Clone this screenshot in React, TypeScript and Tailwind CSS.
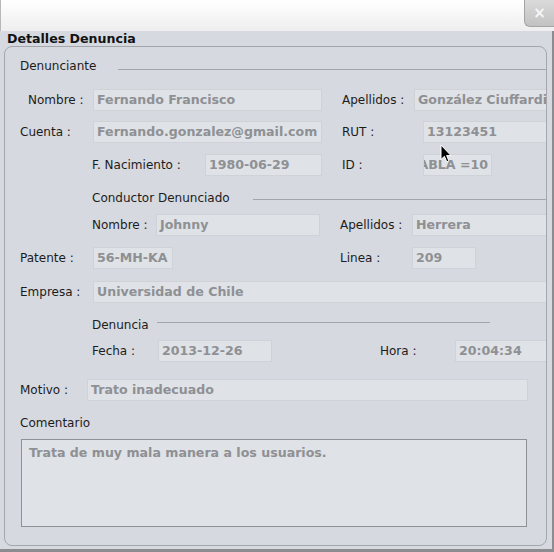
import React from 'react';

const Field: React.FC<{ className: string; children?: React.ReactNode; right?: boolean }> = ({ className, children, right }) => (
  <div
    className={`h-[22px] shrink-0 bg-[#dfe2e6] border border-[#cfd2d7] flex items-center overflow-hidden whitespace-nowrap font-bold text-[12.6px] text-[#8e9094] ${
      right ? 'justify-end pr-[3px]' : 'pl-[3px]'
    } ${className}`}
  >
    {children}
  </div>
);

const Label: React.FC<{ className: string; children: React.ReactNode }> = ({ className, children }) => (
  <div className={`shrink-0 whitespace-nowrap ${className}`}>{children}</div>
);

const App: React.FC = () => {
  return (
    <div className="w-[554px] h-[552px] relative overflow-hidden bg-[#d6d9df] font-['DejaVu_Sans',sans-serif] text-[12px] leading-[16px] text-[#1c1c1c]">
      {/* window decoration */}
      <div className="h-[31px] bg-gradient-to-b from-white to-[#eeeeee] flex justify-end border-l border-[#b8b8b8]">
        <div className="w-[30px] h-[27px] bg-gradient-to-b from-[#dadada] to-[#c2c2c2] border-l border-b border-[#a4a4a4] rounded-bl-[6px] flex items-center justify-center text-[#f6f6f6] font-bold text-[15px]">
          ×
        </div>
      </div>

      <div className="h-[521px] border-r-2 border-b-[3px] border-[#8a8c90] flex flex-col">
        <div className="h-[15px] pl-[7px] font-bold text-[12.6px] leading-[15px] text-[#111]">Detalles Denuncia</div>

        <div className="ml-[4px] w-[543px] h-[500px] shrink-0 border border-[#a3a6ab] rounded-[8px] overflow-hidden flex flex-col">
          {/* Denunciante */}
          <div className="mt-[11px] h-[16px] flex items-start">
            <Label className="ml-[15px] w-[98px]">Denunciante</Label>
            <div className="mt-[11px] flex-1 h-px bg-[#a2a5aa]" />
          </div>

          <div className="mt-[15px] h-[22px] flex items-center">
            <Label className="ml-[23px] w-[65px]">Nombre :</Label>
            <Field className="w-[229px]">Fernando Francisco</Field>
            <Label className="ml-[20px] w-[72px]">Apellidos :</Label>
            <Field className="w-[145px]">González Ciuffardi</Field>
          </div>

          <div className="mt-[10px] h-[22px] flex items-center">
            <Label className="ml-[15px] w-[73px]">Cuenta :</Label>
            <Field className="w-[229px]">Fernando.gonzalez@gmail.com</Field>
            <Label className="ml-[20px] w-[81px]">RUT :</Label>
            <Field className="w-[140px]">13123451</Field>
          </div>

          <div className="mt-[11px] h-[22px] flex items-center">
            <Label className="ml-[87px] w-[113px]">F. Nacimiento :</Label>
            <Field className="w-[117px]">1980-06-29</Field>
            <Label className="ml-[20px] w-[81px]">ID :</Label>
            <Field className="w-[69px]" right>
              TABLA =10
            </Field>
          </div>

          {/* Conductor Denunciado */}
          <div className="mt-[14px] h-[16px] flex items-start">
            <Label className="ml-[87px] w-[161px]">Conductor Denunciado</Label>
            <div className="mt-[9px] flex-1 h-px bg-[#a2a5aa]" />
          </div>

          <div className="mt-[8px] h-[22px] flex items-center">
            <Label className="ml-[87px] w-[64px]">Nombre :</Label>
            <Field className="w-[164px]">Johnny</Field>
            <Label className="ml-[20px] w-[72px]">Apellidos :</Label>
            <Field className="w-[145px]">Herrera</Field>
          </div>

          <div className="mt-[11px] h-[22px] flex items-center">
            <Label className="ml-[15px] w-[73px]">Patente :</Label>
            <Field className="w-[80px]">56-MH-KA</Field>
            <Label className="ml-[167px] w-[72px]">Linea :</Label>
            <Field className="w-[64px]">209</Field>
          </div>

          <div className="mt-[12px] h-[22px] flex items-center">
            <Label className="ml-[15px] w-[73px]">Empresa :</Label>
            <Field className="w-[460px]">Universidad de Chile</Field>
          </div>

          {/* Denuncia */}
          <div className="mt-[14px] h-[16px] flex items-start">
            <Label className="ml-[87px] w-[65px]">Denuncia</Label>
            <div className="mt-[5px] w-[333px] h-px bg-[#a2a5aa]" />
          </div>

          <div className="mt-[7px] h-[22px] flex items-center">
            <Label className="ml-[87px] w-[66px]">Fecha :</Label>
            <Field className="w-[114px]">2013-12-26</Field>
            <Label className="ml-[108px] w-[75px]">Hora :</Label>
            <Field className="w-[100px]">20:04:34</Field>
          </div>

          <div className="mt-[17px] h-[22px] flex items-center">
            <Label className="ml-[15px] w-[67px]">Motivo :</Label>
            <Field className="w-[441px]">Trato inadecuado</Field>
          </div>

          <div className="mt-[14px] h-[16px] flex items-center">
            <Label className="ml-[15px]">Comentario</Label>
          </div>

          <div className="mt-[8px] ml-[16px] w-[506px] h-[88px] shrink-0 bg-[#dfe2e6] border border-[#8e9196] pt-[5px] pl-[7px] font-bold text-[12.6px] text-[#8e9094]">
            Trata de muy mala manera a los usuarios.
          </div>
        </div>
      </div>

      {/* mouse pointer */}
      <svg className="absolute left-[440px] top-[144px]" width="12" height="19" viewBox="0 0 12 19">
        <path
          d="M1 1 L1 15.5 L4.4 12.3 L6.8 17.8 L8.9 16.9 L6.6 11.6 L11 11.6 Z"
          fill="#000"
          stroke="#fff"
          strokeWidth="1"
          strokeLinejoin="round"
        />
      </svg>
    </div>
  );
};

export default App;
